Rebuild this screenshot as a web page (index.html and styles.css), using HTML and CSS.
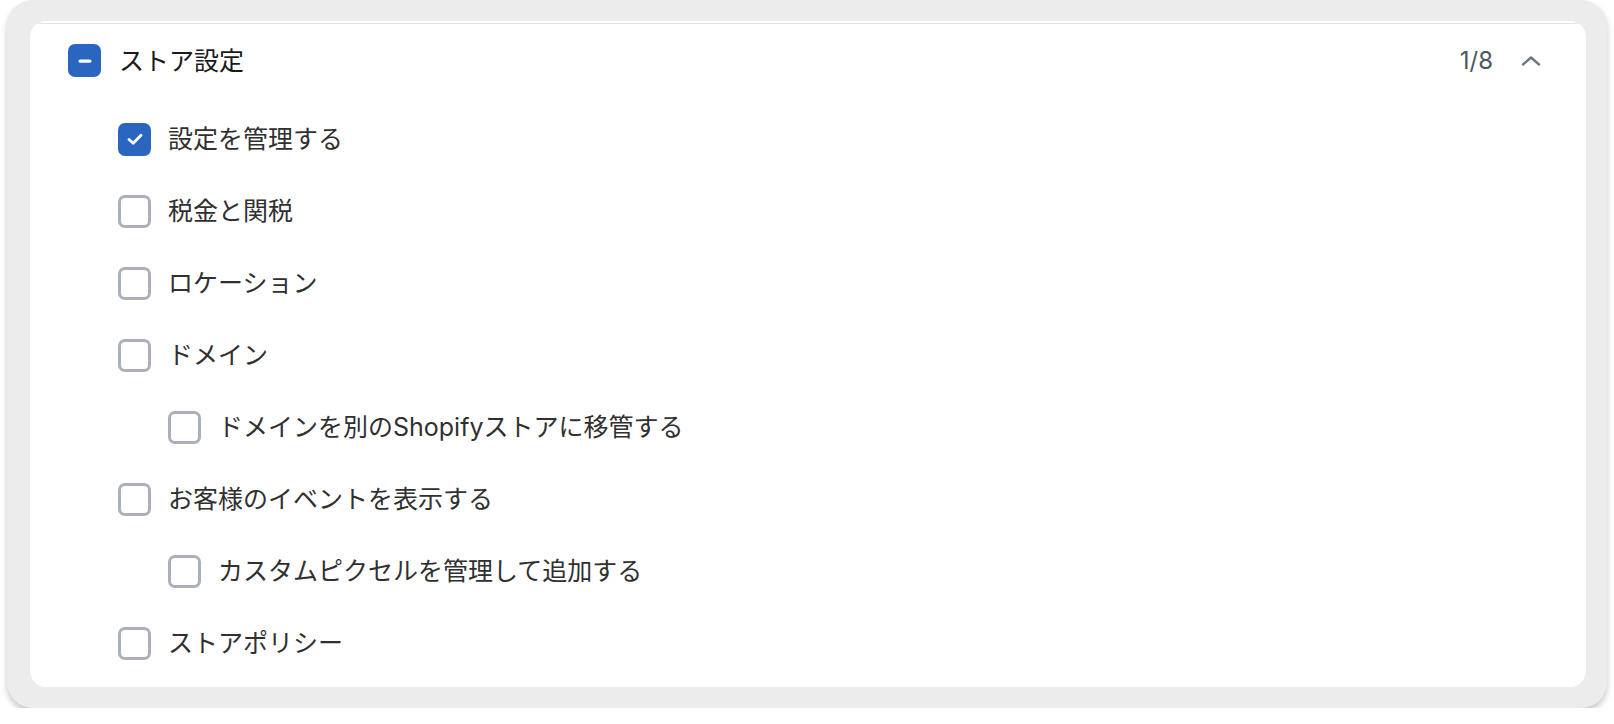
FILE: index.html
```html
<!DOCTYPE html>
<html lang="ja">
<head>
<meta charset="utf-8">
<title>ストア設定</title>
<link rel="stylesheet" href="styles.css">
</head>
<body>
<div class="frame">
  <div class="card">
    <div class="card-rule"></div>
    <div class="header">
      <span class="box box-on">
        <svg viewBox="0 0 32 32" width="32" height="32"><rect x="9.5" y="14.5" width="13" height="3.2" rx="1.6" fill="#fff"/></svg>
      </span>
      <span class="header-title">ストア設定</span>
      <span class="count">1/8</span>
      <span class="chevron">
        <svg viewBox="0 0 24 24" width="24" height="24"><path d="M4 15.5 L12 8.5 L20 15.5" fill="none" stroke="#6f7782" stroke-width="2.4" stroke-linecap="round" stroke-linejoin="round"/></svg>
      </span>
    </div>
    <ul class="list">
      <li class="item lvl1"><span class="box box-on"><svg viewBox="0 0 32 32" width="32" height="32"><path d="M10 16.5 L14.2 20.3 L22 12.3" fill="none" stroke="#fff" stroke-width="2.8" stroke-linecap="round" stroke-linejoin="round"/></svg></span><span class="label">設定を管理する</span></li>
      <li class="item lvl1"><span class="box"></span><span class="label">税金と関税</span></li>
      <li class="item lvl1"><span class="box"></span><span class="label">ロケーション</span></li>
      <li class="item lvl1"><span class="box"></span><span class="label">ドメイン</span></li>
      <li class="item lvl2"><span class="box"></span><span class="label">ドメインを別のShopifyストアに移管する</span></li>
      <li class="item lvl1"><span class="box"></span><span class="label">お客様のイベントを表示する</span></li>
      <li class="item lvl2"><span class="box"></span><span class="label">カスタムピクセルを管理して追加する</span></li>
      <li class="item lvl1"><span class="box"></span><span class="label">ストアポリシー</span></li>
    </ul>
  </div>
</div>
</body>
</html>
```

FILE: styles.css
```css
html, body {
  margin: 0;
  padding: 0;
  background: #ffffff;
}

body {
  font-family: "Inter", "Noto Sans CJK JP", sans-serif;
  color: #303030;
}

.frame {
  box-sizing: border-box;
  margin-left: 7px;
  width: 1600px;
  height: 708px;
  padding: 21px 21px 21px 23px;
  background: #ececec;
  border-radius: 26px;
  box-shadow: 0 4px 6px rgba(0, 0, 0, 0.22);
}

.card {
  box-sizing: border-box;
  height: 666px;
  background: #ffffff;
  border-radius: 16px;
  overflow: hidden;
}

.card-rule {
  height: 1px;
  margin-top: 2px;
  background: #e3e3e3;
}

.header {
  display: flex;
  align-items: center;
  padding: 20px 43px 27px 38px;
}

.header-title {
  margin-left: 18px;
  font-size: 25px;
  line-height: 32px;
  color: #1a1a1a;
  flex: 1;
}

.count {
  font-size: 24px;
  font-weight: 400;
  line-height: 32px;
  color: #4f5763;
}

.chevron {
  display: flex;
  margin-left: 26px;
}

.box {
  box-sizing: border-box;
  flex: none;
  width: 33px;
  height: 33px;
  border: 3px solid #a9b0ba;
  border-radius: 7px;
  background: #ffffff;
  display: flex;
  align-items: center;
  justify-content: center;
}

.box svg {
  display: block;
  flex: none;
}

.box-on {
  border: none;
  background: #2a66c0;
}

.list {
  list-style: none;
  margin: 0;
  padding: 0;
}

.item {
  display: flex;
  align-items: center;
  height: 72px;
  margin-top: -1px;
  margin-bottom: 1px;
}

.lvl1 {
  padding-left: 88px;
}

.lvl2 {
  padding-left: 138px;
}

.label {
  margin-left: 17px;
  font-size: 25px;
  line-height: 32px;
  color: #303030;
}
```
